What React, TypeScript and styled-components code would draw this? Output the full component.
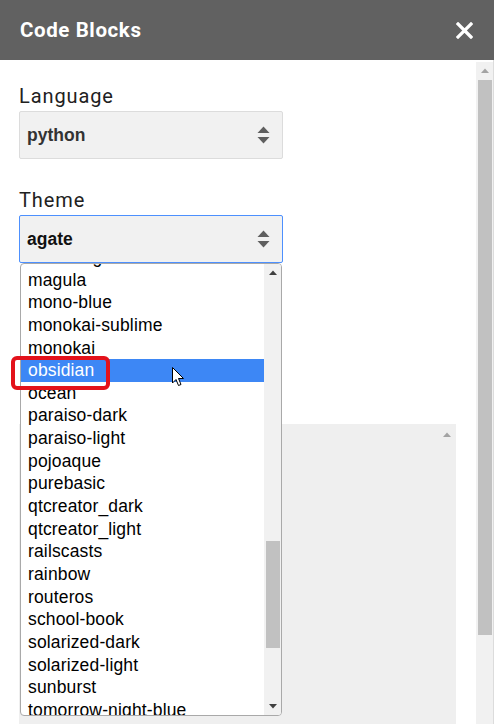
import React from 'react';
import styled, { createGlobalStyle, css } from 'styled-components';

const GlobalStyle = createGlobalStyle`
	html, body {
		margin: 0;
		padding: 0;
		background: #fff;
		overflow: hidden;
	}
	body {
		font-family: Roboto, 'Liberation Sans', Arial, sans-serif;
	}
`;

const themes = [
	'kimbie.light',
	'magula',
	'mono-blue',
	'monokai-sublime',
	'monokai',
	'obsidian',
	'ocean',
	'paraiso-dark',
	'paraiso-light',
	'pojoaque',
	'purebasic',
	'qtcreator_dark',
	'qtcreator_light',
	'railscasts',
	'rainbow',
	'routeros',
	'school-book',
	'solarized-dark',
	'solarized-light',
	'sunburst',
	'tomorrow-night-blue',
	'tomorrow-night-bright',
];

const Page = styled.div`
	display: flex;
	width: 499px;
	height: 724px;
	overflow: hidden;
`;

const Panel = styled.div`
	display: flex;
	flex-direction: column;
	width: 494px;
	height: 724px;
`;

const Edge = styled.div`
	width: 5px;
	background: #fff;
`;

const Header = styled.header`
	display: flex;
	align-items: center;
	justify-content: space-between;
	height: 60px;
	flex: none;
	padding: 0 21px 0 20px;
	box-sizing: border-box;
	background: #616161;
`;

const Title = styled.h1`
	margin: 0;
	font-family: Roboto, 'Liberation Sans', sans-serif;
	font-size: 20.5px;
	letter-spacing: 0.6px;
	font-weight: 700;
	color: #fff;
`;

const CloseButton = styled.button`
	display: flex;
	padding: 0;
	border: 0;
	background: none;
	cursor: pointer;
`;

const Body = styled.div`
	display: flex;
	flex: 1;
	min-height: 0;
	border-right: 1px solid #dcdcdc;
`;

const Content = styled.div`
	flex: 1;
	padding: 24px 0 0 19px;
`;

const FieldLabel = styled.div`
	font-size: 20px;
	letter-spacing: 0.9px;
	line-height: 24px;
	color: #212121;
	margin-bottom: 3px;
	${(p: { $spaced?: boolean }) =>
		p.$spaced &&
		css`
			margin-top: 29px;
		`}
`;

const Field = styled.div`
	position: relative;
	width: 264px;
`;

const SelectBox = styled.div<{ $focused?: boolean }>`
	display: flex;
	align-items: center;
	justify-content: space-between;
	height: 48px;
	box-sizing: border-box;
	padding: 0 12px 0 7px;
	background: #f1f1f1;
	border: 1px solid ${(p) => (p.$focused ? '#4d90fe' : '#dcdcdc')};
	border-radius: 2px;
`;

const SelectValue = styled.span<{ $focused?: boolean }>`
	font-family: 'Liberation Sans', Arial, sans-serif;
	font-size: 17.5px;
	font-weight: 700;
	color: ${(p) => (p.$focused ? '#111' : '#333')};
`;

const Dropdown = styled.div`
	position: absolute;
	top: 100%;
	left: 1px;
	width: 262px;
	height: 453px;
	box-sizing: border-box;
	display: flex;
	background: #fff;
	border: 1px solid #a9a9a9;
	border-radius: 4px;
	overflow: hidden;
	z-index: 5;
`;

const OptionList = styled.ul`
	flex: 1;
	margin: -18px 0 0;
	padding: 0;
	list-style: none;
`;

const OptionItem = styled.li<{ $active?: boolean }>`
	height: 22.65px;
	line-height: 22.65px;
	padding-left: 7px;
	font-family: 'Liberation Sans', Arial, sans-serif;
	font-size: 17.5px;
	letter-spacing: 0.15px;
	color: ${(p) => (p.$active ? '#fff' : '#000')};
	background: ${(p) => (p.$active ? '#3d87f5' : 'transparent')};
	white-space: nowrap;
`;

const Scrollbar = styled.div<{ $width?: number }>`
	display: flex;
	flex-direction: column;
	width: ${(p) => p.$width ?? 17}px;
	flex: none;
	background: #f1f1f1;
`;

const ArrowButton = styled.div`
	display: flex;
	align-items: center;
	justify-content: center;
	height: 17px;
	flex: none;
`;

const Thumb = styled.div<{ $offset: number; $length: number }>`
	margin: ${(p) => p.$offset}px 1px 0 2px;
	height: ${(p) => p.$length}px;
	background: #c1c1c1;
`;

const BottomArrow = styled(ArrowButton)`
	margin-top: auto;
`;

const MainScrollbar = styled(Scrollbar)`
	margin: 2px 0 0 0;
`;

const Callout = styled.div`
	position: absolute;
	left: -8px;
	top: 141px;
	width: 99px;
	height: 34px;
	box-sizing: border-box;
	border: 4px solid #e3121b;
	border-radius: 6px;
	z-index: 6;
`;

const Pointer = styled.svg`
	position: absolute;
	left: 153px;
	top: 152px;
	z-index: 7;
`;

const CodeArea = styled.div`
	display: flex;
	justify-content: flex-end;
	width: 437px;
	height: 320px;
	margin-top: 161px;
	background: #efefef;
`;

const CodeScroll = styled.div`
	display: flex;
	justify-content: center;
	width: 18px;
	padding-top: 8px;
`;

const Triangle = ({ dir, color }: { dir: 'up' | 'down'; color: string }) => (
	<svg width="8" height="5" viewBox="0 0 8 5">
		<path d={dir === 'up' ? 'M0 5 L4 0.5 L8 5 Z' : 'M0 0 L8 0 L4 4.5 Z'} fill={color} />
	</svg>
);

const SortArrows = () => (
	<svg width="13" height="18" viewBox="0 0 13 18">
		<path d="M0.5 7 L6.5 0.5 L12.5 7 Z" fill="#5f5f5f" />
		<path d="M0.5 11 L12.5 11 L6.5 17.5 Z" fill="#5f5f5f" />
	</svg>
);

const Select: React.FC<{ value: string; focused?: boolean }> = ({ value, focused }) => (
	<SelectBox $focused={focused}>
		<SelectValue $focused={focused}>{value}</SelectValue>
		<SortArrows />
	</SelectBox>
);

const App: React.FC = () => {
	return (
		<>
			<GlobalStyle />
			<Page>
				<Panel>
					<Header>
						<Title>Code Blocks</Title>
						<CloseButton aria-label="Close">
							<svg width="17" height="17" viewBox="0 0 17 17">
								<path d="M2 2 L15 15 M15 2 L2 15" stroke="#fff" strokeWidth="3.2" strokeLinecap="square" />
							</svg>
						</CloseButton>
					</Header>
					<Body>
						<Content>
							<FieldLabel>Language</FieldLabel>
							<Field>
								<Select value="python" />
							</Field>
							<FieldLabel $spaced>Theme</FieldLabel>
							<Field>
								<Select value="agate" focused />
								<Dropdown>
									<OptionList>
										{themes.map((t) => (
											<OptionItem key={t} $active={t === 'obsidian'}>
												{t}
											</OptionItem>
										))}
									</OptionList>
									<Scrollbar>
										<ArrowButton>
											<Triangle dir="up" color="#404040" />
										</ArrowButton>
										<Thumb $offset={260} $length={107} />
										<BottomArrow>
											<Triangle dir="down" color="#404040" />
										</BottomArrow>
									</Scrollbar>
								</Dropdown>
								<Callout />
								<Pointer width="13" height="20" viewBox="0 0 13 20">
									<path
										d="M0.5 0.5 L0.5 16 L4 12.5 L6.5 18.5 L9 17.5 L6.5 11.5 L11.5 11.5 Z"
										fill="#fff"
										stroke="#000"
										strokeWidth="1"
										strokeLinejoin="round"
									/>
								</Pointer>
							</Field>
							<CodeArea>
								<CodeScroll>
									<Triangle dir="up" color="#a3a3a3" />
								</CodeScroll>
							</CodeArea>
						</Content>
						<MainScrollbar>
							<ArrowButton>
								<Triangle dir="up" color="#a3a3a3" />
							</ArrowButton>
							<Thumb $offset={1} $length={555} />
						</MainScrollbar>
					</Body>
				</Panel>
				<Edge />
			</Page>
		</>
	);
};

export default App;
